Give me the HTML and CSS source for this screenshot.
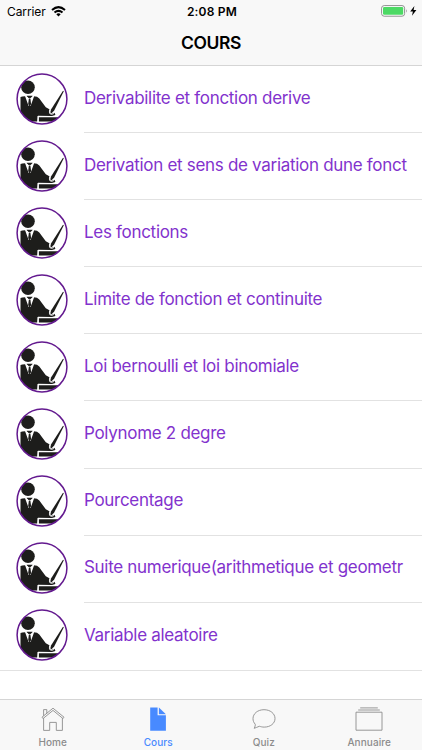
FILE: index.html
```
<!DOCTYPE html>
<html lang="fr">
<head>
    <meta charset="UTF-8" />
    <meta name="viewport" content="width=device-width, initial-scale=1" />
    <title>Cours</title>
    <link rel="stylesheet" href="styles.css">
</head>
<body>
    <!-- Icône du professeur, réutilisée sur chaque ligne -->
    <svg class="defs" width="0" height="0">
        <symbol id="teacher" viewBox="0 0 52 52">
            <clipPath id="round"><circle cx="26" cy="26" r="25" /></clipPath>
            <circle cx="26" cy="26" r="25" fill="#fff" />
            <g clip-path="url(#round)" fill="#1d1d1b">
                <circle cx="12" cy="14.2" r="6.8" />
                <path d="M4.5 24 Q6 23.3 9 23.2 H17.8 Q21.5 23.2 23.3 25.6 L29.8 34.2 L33.4 36.2 Q32.6 39.6 35 41 L38.7 39.8 L39.4 42 L36 43 L22 42.8 L21.3 48.6 H4.5 Z" />
                <path d="M9 23 L12.6 33 H14.6 L18.2 23 H16.6 L14.6 24.8 H12.6 L10.6 23 Z" fill="#fff" />
                <path d="M10.6 22.8 H16.6 L14.8 24.8 H12.4 Z" />
                <path d="M12.9 25.4 H14.4 L15.1 31 L13.6 34 L12.2 31 Z" />
                <path d="M22.8 44.3 H44 V48.4 H22.8 Z" />
                <path d="M47 17.8 L47.8 18.2 L38.2 37.6 L35.6 40.2 L34.3 39.4 L35 36.5 Z" />
            </g>
            <path d="M22 43 V49" stroke="#fff" stroke-width="1" />
            <path d="M33.8 37 Q32.4 41.3 35.7 41.4 Q38.2 41.3 38.4 38.8" fill="none" stroke="#fff" stroke-width="0.8" />
            <circle cx="26" cy="26" r="24.9" fill="none" stroke="#63198f" stroke-width="1.5" />
        </symbol>
    </svg>

    <header>
        <div class="status">
            <div class="carrier">
                <span>Carrier</span>
                <svg width="15" height="11" viewBox="0 0 15 11" fill="none" stroke="#000" stroke-width="2">
                    <path d="M1 4 Q7.5 -1.7 14 4" />
                    <path d="M3.5 6.6 Q7.5 3.1 11.5 6.6" />
                    <path d="M5.3 8.2 Q7.5 6.3 9.7 8.2 L7.5 10.4 Z" fill="#000" stroke="none" />
                </svg>
            </div>
            <div class="time">2:08 PM</div>
            <div class="battery">
                <svg width="36" height="12" viewBox="0 0 36 12">
                    <rect x="0.6" y="0.6" width="23" height="10.6" rx="2.6" fill="#fff" stroke="#8e8e8e" />
                    <rect x="2" y="2" width="20.2" height="7.8" rx="1.2" fill="#4cd964" />
                    <path d="M25 4 Q26.6 5.9 25 7.8 Z" fill="#8e8e8e" />
                    <path d="M33.4 1 L29.2 6.5 H31.9 L31 10.8 L35.4 5.1 H32.6 Z" />
                </svg>
            </div>
        </div>
        <h1>COURS</h1>
    </header>

    <main>
        <ul class="list">
            <li><svg class="avatar"><use href="#teacher" /></svg><div class="inner"><span>Derivabilite et fonction derive</span></div></li>
            <li><svg class="avatar"><use href="#teacher" /></svg><div class="inner"><span>Derivation et sens de variation dune fonct</span></div></li>
            <li><svg class="avatar"><use href="#teacher" /></svg><div class="inner"><span>Les fonctions</span></div></li>
            <li><svg class="avatar"><use href="#teacher" /></svg><div class="inner"><span>Limite de fonction et continuite</span></div></li>
            <li><svg class="avatar"><use href="#teacher" /></svg><div class="inner"><span>Loi bernoulli et loi binomiale</span></div></li>
            <li><svg class="avatar"><use href="#teacher" /></svg><div class="inner"><span>Polynome 2 degre</span></div></li>
            <li><svg class="avatar"><use href="#teacher" /></svg><div class="inner"><span>Pourcentage</span></div></li>
            <li><svg class="avatar"><use href="#teacher" /></svg><div class="inner"><span>Suite numerique(arithmetique et geometr</span></div></li>
            <li><svg class="avatar"><use href="#teacher" /></svg><div class="inner"><span>Variable aleatoire</span></div></li>
        </ul>
    </main>

    <nav class="tabs">
        <a href="#">
            <svg width="28" height="28" viewBox="0 0 28 28">
                <path d="M3 13.2 L14 4.2 L25 13.2 L24 14.6 L14 6.4 L4 14.6 Z M4.6 14.2 V26.4 H10.7 V18.4 H17.3 V26.4 H23.4 V14.2 M4.6 11.8 V5.6 H7.8 V9.2" />
            </svg>
            <span>Home</span>
        </a>
        <a href="#" class="active">
            <svg width="28" height="28" viewBox="0 0 28 28">
                <path d="M6.2 3.4 H13.6 V11.3 H21.9 V26.8 H6.2 Z" />
                <path d="M14.9 3.4 L21.9 10.2 H14.9 Z" />
            </svg>
            <span>Cours</span>
        </a>
        <a href="#">
            <svg width="28" height="28" viewBox="0 0 28 28">
                <path d="M5.2 20.2 C3.7 18.5 3 16.7 3 14.7 C3 9.5 7.8 5.7 14 5.7 C20.2 5.7 25 9.5 25 14.5 C25 19.6 20.2 23.1 14.2 23.1 C12.2 23.1 10.8 22.7 9.8 22.3 C9.1 22.1 7.5 23.2 4.2 24.3 C5 22.6 5.6 21 5.2 20.2 Z" />
            </svg>
            <span>Quiz</span>
        </a>
        <a href="#">
            <svg width="28" height="28" viewBox="0 0 28 28">
                <path d="M1 8.2 H27 V26.2 H1 Z M3.2 6 H24.8 M5.2 3.9 H22.8" />
            </svg>
            <span>Annuaire</span>
        </a>
    </nav>
</body>
</html>
```
FILE: styles.css
```
* {
    box-sizing: border-box;
}

body {
    margin: 0;
    height: 750px;
    display: flex;
    flex-direction: column;
    overflow: hidden;
    background: #fff;
    font-family: Inter, sans-serif;
}

.defs {
    position: absolute;
}

header {
    height: 66px;
    background: #f8f8f8;
    border-bottom: 1px solid #d5d5d5;
}

.status {
    display: grid;
    grid-template-columns: 1fr auto 1fr;
    align-items: center;
    height: 22px;
    padding: 0 5px 0 7px;
    font-size: 12px;
}

.carrier {
    display: flex;
    align-items: center;
    gap: 5px;
    letter-spacing: -0.1px;
}

.time {
    font-weight: 600;
    letter-spacing: 0.2px;
}

.battery {
    display: flex;
    justify-content: flex-end;
}

h1 {
    margin: 0;
    line-height: 42px;
    text-align: center;
    font-size: 17.5px;
    font-weight: 600;
    letter-spacing: -0.4px;
}

main {
    flex: 1;
    min-height: 0;
}

.list {
    list-style: none;
    margin: 0;
    padding: 0;
    border-bottom: 1px solid #e2e2e2;
}

.list li {
    display: flex;
    align-items: center;
    height: 67.1px;
    padding-left: 16px;
}

.avatar {
    flex: none;
    width: 52px;
    height: 52px;
    margin-bottom: 2px;
}

.inner {
    flex: 1;
    min-width: 0;
    height: 100%;
    margin-left: 16px;
    padding: 0 16px 3px 0;
    display: flex;
    align-items: center;
    border-bottom: 1px solid #e2e2e2;
    color: #8232cd;
    font-size: 17px;
    letter-spacing: -0.3px;
    white-space: nowrap;
}

.list li:last-child .inner {
    border-bottom: none;
}

.tabs {
    display: flex;
    height: 51px;
    background: #f8f8f8;
    border-top: 1px solid #d5d5d5;
}

.tabs a {
    flex: 1;
    display: flex;
    flex-direction: column;
    align-items: center;
    padding-top: 4px;
    color: #8c8c8c;
    font-size: 10px;
    font-weight: 500;
    line-height: 14px;
    letter-spacing: 0.1px;
    text-decoration: none;
}

.tabs svg {
    margin-bottom: 3px;
    fill: none;
    stroke: #8c8c8c;
    stroke-width: 0.9;
}

.tabs .active {
    color: #488aff;
}

.tabs .active svg {
    fill: #488aff;
    stroke: none;
}
```
